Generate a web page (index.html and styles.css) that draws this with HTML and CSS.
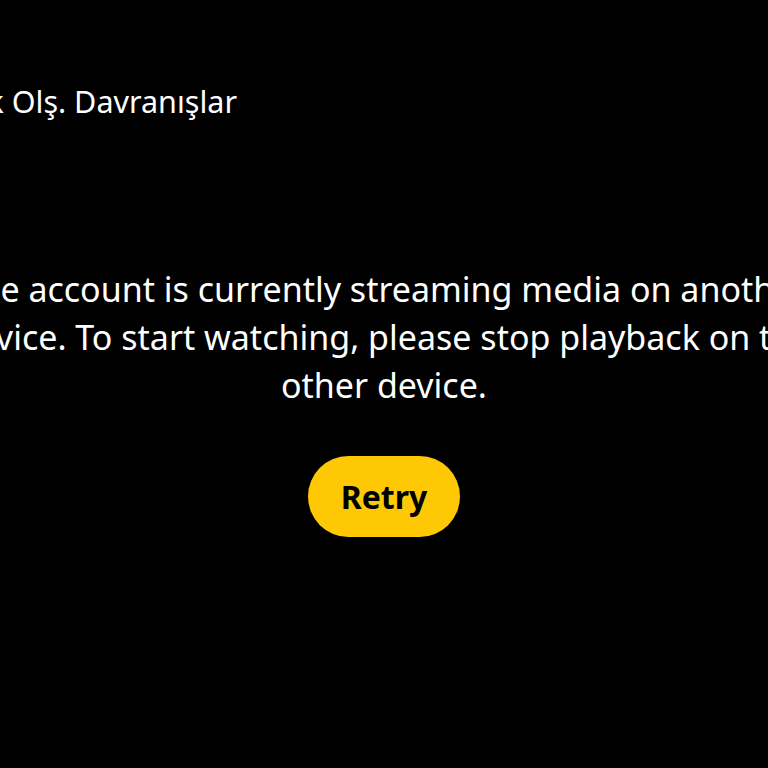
FILE: index.html
```html
<!DOCTYPE html>
<html lang="tr">
<head>
    <meta charset="UTF-8">
    <meta name="viewport" content="width=device-width, initial-scale=1.0">
    <title>Oynatma hatası</title>
    <link rel="stylesheet" href="styles.css">
</head>
<body>
    <header class="top-bar">
        <div class="title-box">
            <h1 class="show-title">Çocuk Olş. Davranışlar</h1>
        </div>
    </header>

    <main class="error-panel">
        <p class="error-message">The account is currently streaming media on another device. To start watching, please stop playback on the other device.</p>
        <button class="retry-btn">Retry</button>
    </main>
</body>
</html>
```

FILE: styles.css
```css
html, body {
    height: 100%;
}
body {
    margin: 0;
    background-color: #000;
    color: #fff;
    font-family: 'Noto Sans', 'Open Sans', sans-serif;
    overflow: hidden;
}
.top-bar {
    padding-top: 80px;
}
.title-box {
    width: 237px;
    display: flex;
    justify-content: flex-end;
}
.show-title {
    margin: 0;
    font-size: 30.5px;
    font-weight: 400;
    line-height: 42px;
    white-space: nowrap;
}
.error-panel {
    display: flex;
    flex-direction: column;
    align-items: center;
    padding-top: 143px;
}
.error-message {
    width: 920px;
    flex-shrink: 0;
    margin: 0 0 47px;
    font-size: 34px;
    line-height: 48px;
    text-align: center;
}
.retry-btn {
    background-color: #ffc805;
    color: #000;
    border: none;
    border-radius: 41px;
    height: 81px;
    padding: 0 33px;
    font-family: inherit;
    font-size: 32px;
    font-weight: 700;
    cursor: pointer;
}
```
